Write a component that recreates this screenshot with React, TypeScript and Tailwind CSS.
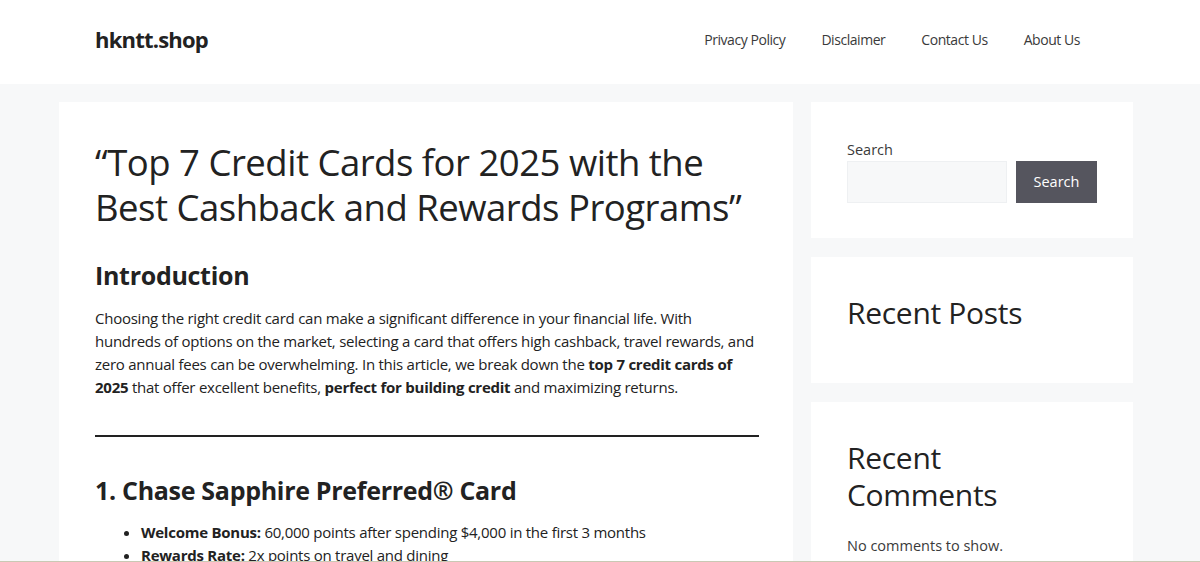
import React from 'react';

const navLinks = ['Privacy Policy', 'Disclaimer', 'Contact Us', 'About Us'];

const font = { fontFamily: '"Open Sans", "Noto Sans", sans-serif' };

const App: React.FC = () => {
	return (
		<div
			className="h-[562px] overflow-hidden bg-[#f7f8f9] text-[#222222] border-b border-[#c9c9b4]"
			style={font}
		>
			<header className="h-[84px] bg-white flex items-center justify-between pl-[95px] pr-[120px] pb-[6px]">
				<div className="text-[22px] font-bold text-[#222222] tracking-[-0.8px]">hkntt.shop</div>
				<nav className="flex items-center gap-[36px] text-[14px] text-[#3a3a3a]">
					{navLinks.map((link) => (
						<a key={link} href="#" className="tracking-[-0.45px]">
							{link}
						</a>
					))}
				</nav>
			</header>

			<div className="flex gap-[18px] pl-[59px] pt-[18px]">
				<main className="w-[734px] bg-white px-9 pt-[38px] pb-10 shrink-0">
					<h1 className="text-[36.5px] leading-[45px] font-normal tracking-[-0.5px] text-[#222222] whitespace-nowrap">
						“Top 7 Credit Cards for 2025 with the
						<br />
						Best Cashback and Rewards Programs”
					</h1>

					<h2 className="mt-[28px] text-[25px] leading-[34px] font-bold tracking-[-0.3px]">Introduction</h2>

					<p className="mt-[15px] text-[15px] leading-[23px] text-[#222222] tracking-[-0.25px]">
						Choosing the right credit card can make a significant difference in your financial life. With
						hundreds of options on the market, selecting a card that offers high cashback, travel rewards, and
						zero annual fees can be overwhelming. In this article, we break down the{' '}
						<strong>top 7 credit cards of 2025</strong> that offer excellent benefits,{' '}
						<strong>perfect for building credit</strong> and maximizing returns.
					</p>

					<hr className="mt-[36px] border-0 h-[2px] bg-[#222222] mr-[-2px]" />

					<h2 className="mt-[36px] text-[25px] leading-[34px] font-bold tracking-[-0.3px]">
						1. Chase Sapphire Preferred®&nbsp;Card
					</h2>

					<ul className="mt-[14px] pl-[46px] list-disc text-[15px] leading-[23px] tracking-[-0.25px]">
						<li>
							<strong>Welcome Bonus:</strong> 60,000 points after spending $4,000 in the first 3 months
						</li>
						<li>
							<strong>Rewards Rate:</strong> 2x points on travel and dining
						</li>
						<li>
							<strong>Annual Fee:</strong> $95
						</li>
					</ul>
				</main>

				<aside className="w-[322px] flex flex-col gap-[19px] shrink-0">
					<section className="bg-white h-[136px] px-9 pt-[38px]">
						<label htmlFor="search" className="block text-[14.5px] leading-[20px] text-[#3a3a3a]">
							Search
						</label>
						<div className="mt-[1px] flex gap-[9px]">
							<input
								id="search"
								type="text"
								className="w-[160px] h-[42px] bg-[#f7f8f9] border border-[#eef0f2] outline-none"
							/>
							<button className="w-[82px] h-[42px] bg-[#55555e] text-white text-[14.5px]">Search</button>
						</div>
					</section>

					<section className="bg-white h-[126px] px-9 pt-[38px]">
						<h2 className="text-[30px] leading-[36px] font-normal tracking-[-0.3px]">Recent Posts</h2>
					</section>

					<section className="bg-white px-9 pt-[37px] pb-10">
						<h2 className="text-[30px] leading-[37px] font-normal tracking-[-0.3px]">
							Recent
							<br />
							Comments
						</h2>
						<p className="mt-[21px] text-[14.5px] leading-[23px] text-[#3a3a3a]">No comments to show.</p>
					</section>
				</aside>
			</div>
		</div>
	);
};

export default App;
